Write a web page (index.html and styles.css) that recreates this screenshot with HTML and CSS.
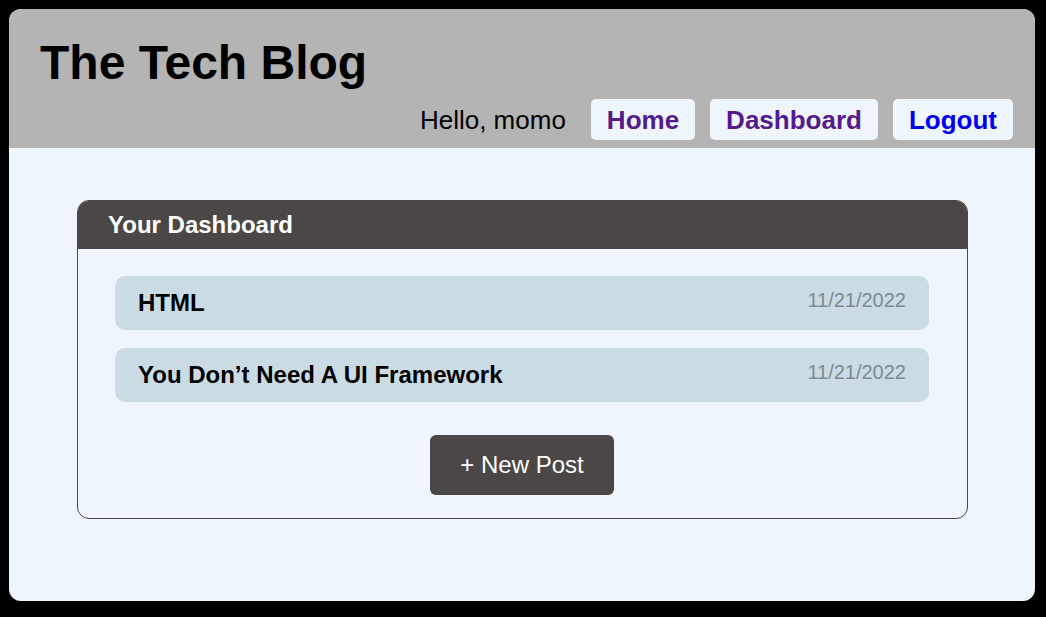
FILE: index.html
```html
<!DOCTYPE html>
<html lang="en">
<head>
<meta charset="utf-8">
<title>The Tech Blog</title>
<link rel="stylesheet" href="styles.css">
</head>
<body>
<div class="app">
  <header class="site-header">
    <h1 class="site-title">The Tech Blog</h1>
    <nav class="nav">
      <span class="greeting">Hello, momo</span>
      <a class="nav-btn visited" href="#">Home</a>
      <a class="nav-btn visited" href="#">Dashboard</a>
      <a class="nav-btn" href="#">Logout</a>
    </nav>
  </header>
  <main class="main">
    <section class="card">
      <h2 class="card-header">Your Dashboard</h2>
      <div class="card-body">
        <div class="post">
          <span class="post-title">HTML</span>
          <span class="post-date">11/21/2022</span>
        </div>
        <div class="post">
          <span class="post-title">You Don’t Need A UI Framework</span>
          <span class="post-date">11/21/2022</span>
        </div>
        <div class="actions">
          <button class="new-post" type="button">+ New Post</button>
        </div>
      </div>
    </section>
  </main>
</div>
</body>
</html>
```

FILE: styles.css
```css
* { box-sizing: border-box; }

html, body {
  margin: 0;
  background: #000;
}

body {
  padding: 9px 11px 16px 9px;
  font-family: "Liberation Sans", Arial, sans-serif;
}

.app {
  width: 1026px;
  height: 592px;
  border-radius: 12px;
  overflow: hidden;
  background: #eef5fd;
  display: flex;
  flex-direction: column;
}

.site-header {
  background: #b4b4b4;
  padding: 26px 22px 8px 31px;
  display: flex;
  flex-direction: column;
}

.site-title {
  margin: 0;
  font-size: 48px;
  line-height: 56px;
  font-weight: 700;
  color: #000;
}

.nav {
  margin-top: 8px;
  display: flex;
  justify-content: flex-end;
  align-items: baseline;
  gap: 15px;
  font-size: 26px;
}

.greeting {
  color: #000;
  margin-right: 10px;
}

.nav-btn {
  display: block;
  background: #eef5fd;
  border-radius: 5px;
  padding: 7px 16px 5px;
  line-height: 29px;
  font-weight: 700;
  text-decoration: none;
  color: #0000ee;
}

.nav-btn.visited {
  color: #551a8b;
}

.main {
  flex: 1;
  padding: 52px 67px 0 68px;
}

.card {
  border: 1px solid #4b4746;
  border-radius: 12px;
  overflow: hidden;
}

.card-header {
  margin: 0;
  background: #4b4746;
  color: #fff;
  font-size: 24px;
  line-height: 28px;
  font-weight: 700;
  padding: 10px 30px;
}

.card-body {
  padding: 27px 38px 23px 37px;
  display: flex;
  flex-direction: column;
  gap: 18px;
}

.post {
  background: #cbdbe3;
  border-radius: 10px;
  padding: 13px 23px;
  display: flex;
  justify-content: space-between;
  align-items: flex-start;
}

.post-title {
  font-size: 24px;
  line-height: 28px;
  font-weight: 700;
  color: #000;
}

.post-date {
  font-size: 20px;
  line-height: 23px;
  color: #7d8a93;
}

.actions {
  display: flex;
  justify-content: center;
  margin-top: 15px;
}

.new-post {
  background: #4b4746;
  color: #fff;
  border: none;
  border-radius: 6px;
  font-family: "Liberation Sans", Arial, sans-serif;
  font-size: 24px;
  line-height: 28px;
  padding: 16px 30px;
}
```
